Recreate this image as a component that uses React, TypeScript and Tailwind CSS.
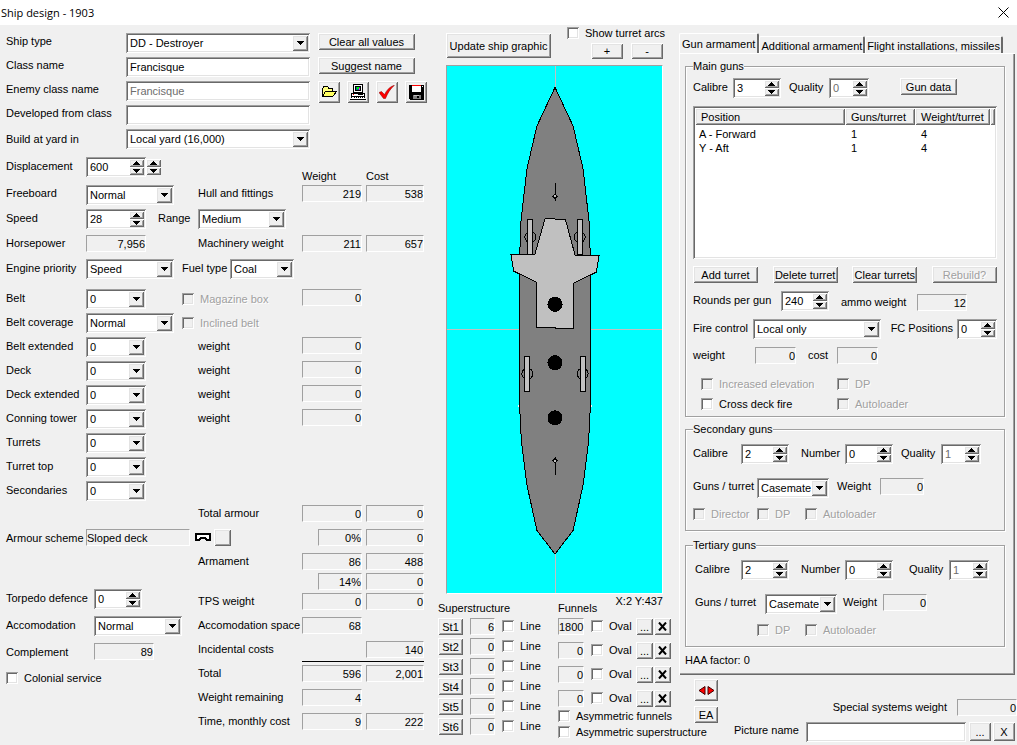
import React, { useId, useState } from 'react';
import { clsx } from 'clsx';

const SUNK = 'bg-white shadow-[inset_1px_1px_#a0a0a0,inset_-1px_-1px_#fff,inset_2px_2px_#696969,inset_-2px_-2px_#e3e3e3]';
const RAISED = 'bg-[#f0f0f0] shadow-[inset_1px_1px_#fff,inset_-1px_-1px_#696969,inset_2px_2px_#e3e3e3,inset_-2px_-2px_#a0a0a0]';
const GREYED = 'text-[#a0a0a0] [text-shadow:1px_1px_#fff]';

const Btn = ({ children, className, disabled, label }: { children?: React.ReactNode, className?: string, disabled?: boolean, label?: string }) => (
  <button type="button" aria-label={label} disabled={disabled} className={clsx('flex items-center justify-center whitespace-nowrap shrink-0', RAISED, disabled && GREYED, className)}>
    {children}
  </button>
);

const Field = ({ value, label, className, id, disabled }: { value?: string, label?: string, className?: string, id?: string, disabled?: boolean }) => (
  <input id={id} aria-label={label} defaultValue={value} disabled={disabled} className={clsx('h-5 min-w-0 px-1 outline-none', SUNK, disabled && 'text-[#6d6d6d]', className)} />
);

const Select = ({ value, label, className, id }: { value: string, label?: string, className?: string, id?: string }) => (
  <span className={clsx('relative flex h-5 shrink-0', className)}>
    <select id={id} aria-label={label} className={clsx('h-5 w-full appearance-none pl-1 pr-[18px] outline-none', SUNK)}>
      <option>{value}</option>
    </select>
    <span className={clsx('pointer-events-none absolute right-0.5 top-0.5 flex h-4 w-4 items-center justify-center', RAISED)}>
      <svg width="7" height="4" shapeRendering="crispEdges"><path d="M0 0h7v1h-1v1h-1v1h-1v1h-1v-1h-1v-1h-1v-1h-1z" /></svg>
    </span>
  </span>
);

const Arrows = ({ value, onStep }: { value: string, onStep: (n: number) => void }) => (
  <>
    <button type="button" aria-label={`${value} up`} onClick={() => onStep(1)} className={clsx('flex h-2 w-[15px] items-center justify-center', RAISED)}>
      <svg width="7" height="4" shapeRendering="crispEdges"><path d="M3 0h1v1h1v1h1v1h1v1h-7v-1h1v-1h1v-1h1z" /></svg>
    </button>
    <button type="button" aria-label={`${value} down`} onClick={() => onStep(-1)} className={clsx('flex h-2 w-[15px] items-center justify-center', RAISED)}>
      <svg width="7" height="4" shapeRendering="crispEdges"><path d="M0 0h7v1h-1v1h-1v1h-1v1h-1v-1h-1v-1h-1v-1h-1z" /></svg>
    </button>
  </>
);

const Spinner = ({ initial, label, className, disabled, id }: { initial: number, label: string, className?: string, disabled?: boolean, id?: string }) => {
  const [value, setValue] = useState(initial);
  return (
    <span className={clsx('flex h-5 shrink-0 p-0.5', SUNK, className)}>
      <input id={id} aria-label={id ? undefined : label} value={value} disabled={disabled} onChange={e => setValue(Number(e.target.value) || 0)} className={clsx('h-4 w-0 min-w-0 flex-1 bg-transparent pl-0.5 outline-none', disabled && 'text-[#6d6d6d]')} />
      <span className="flex flex-col"><Arrows value={label} onStep={n => setValue(v => v + n)} /></span>
    </span>
  );
};

const Value = ({ children, className }: { children: React.ReactNode, className?: string }) => (
  <output className={clsx('block h-[17px] shrink-0 border border-b-white border-l-[#a0a0a0] border-r-white border-t-[#a0a0a0] text-right leading-4', className)}>{children}</output>
);

const Check = ({ children, className, disabled }: { children: React.ReactNode, className?: string, disabled?: boolean }) => (
  <label className={clsx('flex items-center gap-1.5 whitespace-nowrap leading-4', disabled && GREYED, className)}>
    <input type="checkbox" disabled={disabled} className={clsx("h-3 w-3 shrink-0 appearance-none checked:before:block checked:before:text-center checked:before:leading-3 checked:before:content-['✓']", SUNK, disabled && 'bg-[#f0f0f0]!')} />
    {children}
  </label>
);

// One line of the design sheet: label, its control, a caption and the weight / cost figures
const Row = ({ label, id, control, mid, weight, cost, className = 'h-6' }: { label?: string, id?: string, control?: React.ReactNode, mid?: React.ReactNode, weight?: string, cost?: string, className?: string }) => (
  <div className={clsx('flex items-start', className)}>
    <label htmlFor={id} className="w-20 shrink-0">{label}</label>
    <div className="flex w-24 shrink-0">{control}</div>
    <div className="w-[120px] shrink-0">{typeof mid === 'string' ? <span className="pl-4">{mid}</span> : mid}</div>
    {weight !== undefined && <Value className="w-[60px]">{weight}</Value>}
    {cost !== undefined && <Value className="ml-1 w-[58px]">{cost}</Value>}
  </div>
);

const Total = ({ label, weight, cost, percent, className = 'h-6' }: { label?: string, weight?: string, cost?: string, percent?: string, className?: string }) => (
  <div className={clsx('flex items-start', className)}>
    <span className="w-[104px] shrink-0 leading-4">{label}</span>
    <div className="flex w-[60px] shrink-0 justify-end">
      {weight && <Value className="w-[60px]">{weight}</Value>}
      {percent && <Value className="w-11">{percent}</Value>}
    </div>
    {cost && <Value className="ml-1 w-[58px]">{cost}</Value>}
  </div>
);

const ARMOUR = [
  { label: 'Belt extended', weight: '0' },
  { label: 'Deck', weight: '0' },
  { label: 'Deck extended', weight: '0' },
  { label: 'Conning tower', weight: '0' },
  { label: 'Turrets' },
  { label: 'Turret top' },
  { label: 'Secondaries' },
];

const NameBlock = () => (
  <div className="flex items-start pt-2">
    <div className="grid grid-cols-[120px_184px] auto-rows-[24px] items-start leading-4">
      <label htmlFor="ship-type">Ship type</label><Select id="ship-type" value="DD - Destroyer" />
      <label htmlFor="class-name">Class name</label><Field id="class-name" value="Francisque" />
      <label htmlFor="enemy-name">Enemy class name</label><Field id="enemy-name" value="Francisque" disabled />
      <label htmlFor="developed">Developed from class</label><Field id="developed" />
      <label htmlFor="yard" className="pt-0.5">Build at yard in</label><Select id="yard" value="Local yard (16,000)" />
    </div>
    <div className="ml-2 flex flex-col gap-[7px]">
      <Btn className="h-[17px] w-[97px]">Clear all values</Btn>
      <Btn className="h-[17px] w-[97px]">Suggest name</Btn>
      <div className="flex gap-[7px]">
        <Btn label="Open design" className="h-[22px] w-[22px]">
          <svg width="15" height="12" viewBox="0 0 15 12" shapeRendering="crispEdges">
            <path d="M.5 10V2.500L2 .5h3.500l1.500 2h3.500v3" fill="#ffff80" stroke="#000" />
            <path d="M.5 10.500L3.500 5.500h11l-3.500 4.500z" fill="#ffff60" stroke="#000" />
          </svg>
        </Btn>
        <Btn label="Print design" className="h-[22px] w-[22px]">
          <svg width="16" height="16" viewBox="0 0 16 16" shapeRendering="crispEdges">
            <path d="M3 0h10v9H3z" /><path d="M4 1h8v7H4z" fill="#fff" />
            <path d="M5 2h6v5H5z" /><path d="M6 3h4v3H6z" fill="#008080" /><path d="M7 3h2v2H7z" fill="#00ff00" /><path d="M9 4h1v2H9z" fill="#f0f" />
            <path d="M1 9h14v4H1z" /><path d="M2 10h12v2H2z" fill="#fff" />
            <path d="M3 10h1v1H3z" fill="red" /><path d="M8 10h5v1H8z" />
            <path d="M1 13h14v2h1v1H0v-1h1z" /><path d="M2 13h12v1h1v1H1v-1h1z" fill="#fff" />
            <path d="M4 13.500h9" stroke="#000" strokeDasharray="1 1" />
          </svg>
        </Btn>
        <Btn label="Check design" className="h-[22px] w-[22px]">
          <svg width="16" height="14" viewBox="0 0 16 14"><path d="M0 7.500L2.500 6.500L5.500 9.500C8 4.500 11 1.500 15.500.200C11 4 8.500 8.500 6.500 13.500L4.500 13.500z" fill="red" stroke="#800000" strokeWidth=".5" /></svg>
        </Btn>
        <Btn label="Save design" className="h-[22px] w-[22px]">
          <svg width="15" height="15" viewBox="0 0 15 15" shapeRendering="crispEdges">
            <path d="M0 0h15v15H1l-1-1z" /><path d="M3 0h9v7H3z" fill="#fff" /><path d="M3 0h9v1H3z" fill="red" />
            <path d="M13 1h1v1h-1z" fill="#fff" /><path d="M4 10h8v4H4z" fill="#808080" /><path d="M8 11h2v2H8z" fill="#000" /><path d="M5 10h5v1H5z" fill="#c0c0c0" />
          </svg>
        </Btn>
      </div>
    </div>
  </div>
);

const DesignSheet = () => (
  <section className="w-[432px] shrink-0 pl-1.5">
    <NameBlock />
    <div className="flex h-8 items-start pt-1">
      <label htmlFor="displacement" className="w-20">Displacement</label>
      <Spinner id="displacement" initial={600} label="Displacement" className="w-[60px]" />
      <span className="flex h-[18px] flex-col pt-0.5"><Arrows value="Displacement, large step" onStep={() => {}} /></span>
      <span className="ml-auto w-16 pt-2.5">Weight</span>
      <span className="w-[66px] pt-2.5">Cost</span>
    </div>
    <Row label="Freeboard" id="freeboard" control={<Select id="freeboard" value="Normal" className="w-[88px]" />} mid="Hull and fittings" weight="219" cost="538" className="h-6 leading-4" />
    <div className="flex h-[26px] items-start">
      <label htmlFor="speed" className="w-20">Speed</label>
      <Spinner id="speed" initial={28} label="Speed" className="w-[60px]" />
      <label htmlFor="range" className="ml-3 w-10">Range</label>
      <Select id="range" value="Medium" className="w-[88px]" />
    </div>
    <Row label="Horsepower" control={<Value className="w-[60px]">7,956</Value>} mid="Machinery weight" weight="211" cost="657" className="h-6 leading-4" />
    <div className="flex h-[30px] items-start">
      <label htmlFor="engine" className="w-20">Engine priority</label>
      <Select id="engine" value="Speed" className="w-[88px]" />
      <label htmlFor="fuel" className="ml-2 w-12">Fuel type</label>
      <Select id="fuel" value="Coal" className="w-16" />
    </div>
    <Row label="Belt" id="belt" control={<Select id="belt" value="0" className="w-[60px]" />} mid={<Check disabled className="pt-0.5">Magazine box</Check>} weight="0" />
    <Row label="Belt coverage" id="coverage" control={<Select id="coverage" value="Normal" className="w-[88px]" />} mid={<Check disabled className="pt-0.5">Inclined belt</Check>} />
    {ARMOUR.map(a => (
      <Row key={a.label} label={a.label} id={a.label} control={<Select id={a.label} value="0" className="w-[60px]" />} mid={a.weight && 'weight'} weight={a.weight} />
    ))}
    <Row mid="Total armour" weight="0" cost="0" className="h-6 leading-4" />
    <div className="flex h-6 items-start">
      <span className="w-20 shrink-0">Armour scheme</span>
      <output className="h-[17px] w-[104px] border border-b-white border-l-[#a0a0a0] border-r-white border-t-[#a0a0a0] leading-4">Sloped deck</output>
      <svg width="16" height="9" viewBox="0 0 16 9" className="ml-[5px] mt-1" shapeRendering="crispEdges"><path d="M1 1h14v6h-3l-2-2h-4l-2 2h-3z" fill="#fff" stroke="#000" strokeWidth="2" /></svg>
      <Btn label="Choose armour scheme" className="ml-[3px] h-[17px] w-[17px]" />
      <Value className="ml-auto w-11">0%</Value>
      <Value className="ml-1 mr-2 w-[58px]">0</Value>
    </div>
    <div className="flex items-start">
      <div className="grid w-48 shrink-0 grid-cols-[88px_1fr] items-start gap-y-[7px] pt-9">
        <label htmlFor="torpedo">Torpedo defence</label><Spinner id="torpedo" initial={0} label="Torpedo defence" className="w-12" />
        <label htmlFor="accomodation">Accomodation</label><Select id="accomodation" value="Normal" className="w-[88px]" />
        <span>Complement</span><Value className="w-[60px]">89</Value>
        <Check className="col-span-2 pt-0.5">Colonial service</Check>
      </div>
      <div>
        <Total label="Armament" weight="86" cost="488" className="h-5" />
        <Total percent="14%" cost="0" className="h-5" />
        <Total label="TPS weight" weight="0" cost="0" />
        <Total label="Accomodation space" weight="68" />
        <Total label="Incidental costs" cost="140" className="h-5" />
        <div className="mb-[3px] ml-[104px] border-t border-black" />
        <Total label="Total" weight="596" cost="2,001" />
        <Total label="Weight remaining" weight="4" />
        <Total label="Time, monthly cost" weight="9" cost="222" />
      </div>
    </div>
  </section>
);

const ShipGraphic = () => (
  <svg viewBox="447 66 214 527" preserveAspectRatio="xMidYMid slice" className="h-[529px] w-full border border-b-white border-l-[#a0a0a0] border-r-white border-t-[#a0a0a0] bg-[#00ffff]" shapeRendering="crispEdges" role="img" aria-label="Ship graphic">
    <path d="M554.500 60V600M0 329.500H1200" stroke="#c0c0c0" fill="none" />
    <path d="M518 405h1v2h-1zM590 405h1v2h-1z" fill="#fff" />
    <path d="M554.500 88.500L572.500 127L582.500 170L588.500 223L589.500 253V410L588 440L582.500 484L572.500 529.500L554.500 553L536.500 529.500L526.500 484L521 440L519.500 410V253L520.500 223L526.500 170L536.500 127z" fill="#808080" stroke="#000" />
    <g fill="none" stroke="#000">
      <circle cx="530" cy="237.500" r="5.500" /><circle cx="579" cy="237.500" r="5.500" />
      <circle cx="527" cy="373.500" r="5.500" /><circle cx="582" cy="373.500" r="5.500" />
    </g>
    <g fill="#c0c0c0" stroke="#000">
      <rect x="527.500" y="220.500" width="5" height="34" /><rect x="576.500" y="220.500" width="5" height="34" />
      <rect x="524.500" y="356.500" width="5" height="35" /><rect x="579.500" y="356.500" width="5" height="35" />
      <path d="M544.500 219.500L554.500 219.500L565 220.500L574.500 255.500H598.500L595.500 272.500L572.500 283.500V328.500H554.500V327.500H536.500V282.500L513.500 271.500L510.500 254.500H534.500z" />
      <path d="M554.500 184V202M554.500 456V474" />
      <path d="M554.500 194.500L556.500 197L554.500 199.500L552.500 197zM554.500 457.500L556.500 460L554.500 462.500L552.500 460z" />
    </g>
    <circle cx="554.500" cy="304.500" r="7.500" /><circle cx="554.500" cy="362.500" r="7.500" /><circle cx="554.500" cy="417.500" r="7.500" />
  </svg>
);

const Graphic = () => (
  <section className="min-w-0 flex-1 pr-2">
    <div className="pl-2 pr-2">
      <div className="flex items-start justify-between">
        <Btn className="mt-2 h-[25px] w-[105px]">Update ship graphic</Btn>
        <div className="flex h-10 flex-col items-end gap-0.5">
          <Check className="w-24">Show turret arcs</Check>
          <div className="flex gap-2">
            <Btn className="h-4 w-8">+</Btn>
            <Btn className="h-4 w-8">-</Btn>
          </div>
        </div>
      </div>
      <ShipGraphic />
      <p className="-mt-0.5 h-2 text-right">X:2 Y:437</p>
    </div>
    <div className="flex justify-between leading-4">
      <div>
        <p className="h-[18px]">Superstructure</p>
        {['6', '0', '0', '0', '0', '0'].map((n, i) => (
          <div key={i} className="flex h-5 items-start">
            <Btn className="h-[17px] w-[25px]">St{i + 1}</Btn>
            <Value className="ml-[7px] w-[25px]">{n}</Value>
            <Check className="ml-[7px]">Line</Check>
          </div>
        ))}
      </div>
      <div className="w-[113px]">
        <p className="h-[18px]">Funnels</p>
        {['1800', '0', '0', '0'].map((n, i) => (
          <div key={i} className="flex h-6 items-start">
            <Value className="w-[26px]">{n}</Value>
            <Check className="ml-[7px]">Oval</Check>
            <Btn label={`Funnel ${i + 1} position`} className="ml-auto h-[17px] w-[17px]">...</Btn>
            <Btn label={`Remove funnel ${i + 1}`} className="ml-px h-[17px] w-[17px]">
              <svg width="9" height="9" viewBox="0 0 9 9"><path d="M1 .5L8 8.500M8 .5L1 8.500" stroke="#000" strokeWidth="2" /></svg>
            </Btn>
          </div>
        ))}
        <Check className="-mt-1.5">Asymmetric funnels</Check>
        <Check>Asymmetric superstructure</Check>
      </div>
    </div>
  </section>
);

const Group = ({ title, children, className }: { title: string, children: React.ReactNode, className?: string }) => (
  <fieldset className={clsx('border border-[#a0a0a0] px-[7px] shadow-[1px_1px_#fff,inset_1px_1px_#fff]', className)}>
    <legend className="bg-[#f0f0f0] leading-4">{title}</legend>
    {children}
  </fieldset>
);

const MainGuns = () => (
  <Group title="Main guns" className="pb-1">
    <div className="flex items-start pt-1">
      <label htmlFor="m-cal" className="w-10">Calibre</label><Spinner id="m-cal" initial={3} label="Calibre" className="w-12" />
      <label htmlFor="m-q" className="ml-2 w-10">Quality</label><Spinner id="m-q" initial={0} label="Quality" className="w-10" disabled />
      <Btn className="ml-auto mr-10 h-[17px] w-[57px]">Gun data</Btn>
    </div>
    <div className={clsx('mt-2 h-[153px] p-0.5', SUNK)}>
      <table className="w-full table-fixed border-collapse text-left">
        <thead>
          <tr>
            <th className={clsx('h-[17px] w-[150px] p-0 pl-1.5 font-normal leading-4', RAISED)}>Position</th>
            <th className={clsx('h-[17px] w-[70px] p-0 pl-1.5 font-normal leading-4', RAISED)}>Guns/turret</th>
            <th className={clsx('h-[17px] w-[75px] p-0 pl-1.5 font-normal leading-4', RAISED)}>Weight/turret</th>
            <td className={clsx('h-[17px] p-0', RAISED)} />
          </tr>
        </thead>
        <tbody className="leading-[14px]">
          <tr><td className="p-0 pl-1 pt-0.5">A - Forward</td><td className="p-0 pl-1.5 pt-0.5">1</td><td className="p-0 pl-1.5 pt-0.5">4</td><td /></tr>
          <tr><td className="p-0 pl-1">Y - Aft</td><td className="p-0 pl-1.5">1</td><td className="p-0 pl-1.5">4</td><td /></tr>
        </tbody>
      </table>
    </div>
    <div className="mt-[7px] flex justify-between">
      <Btn className="h-[17px] w-[65px]">Add turret</Btn>
      <Btn className="h-[17px] w-[65px]">Delete turret</Btn>
      <Btn className="h-[17px] w-[65px]">Clear turrets</Btn>
      <Btn className="h-[17px] w-[65px]" disabled>Rebuild?</Btn>
    </div>
    <div className="mt-2 flex items-start">
      <label htmlFor="rounds" className="w-[88px]">Rounds per gun</label><Spinner id="rounds" initial={240} label="Rounds per gun" className="w-12" />
      <span className="ml-3 w-[76px] pt-0.5">ammo weight</span><Value className="mt-[3px] w-[50px]">12</Value>
    </div>
    <div className="mt-2 flex items-start">
      <label htmlFor="fc" className="w-[60px]">Fire control</label><Select id="fc" value="Local only" className="w-32" />
      <label htmlFor="fcp" className="ml-auto mr-1">FC Positions</label><Spinner id="fcp" initial={0} label="FC Positions" className="w-10" />
    </div>
    <div className="mt-2 flex items-start leading-4">
      <span className="w-[62px]">weight</span><Value className="w-[41px]">0</Value>
      <span className="ml-3 w-[29px]">cost</span><Value className="w-[41px]">0</Value>
    </div>
    <div className="mt-3 grid grid-cols-[136px_1fr] gap-y-1 pl-2">
      <Check disabled>Increased elevation</Check><Check disabled>DP</Check>
      <Check>Cross deck fire</Check><Check disabled>Autoloader</Check>
    </div>
  </Group>
);

const SmallGuns = ({ title, director }: { title: string, director?: boolean }) => {
  const id = useId();
  return (
    <Group title={title} className="pb-2">
      <div className={clsx('flex items-start pt-[7px]', !director && 'pl-0.5')}>
        <label htmlFor={id + 'c'} className={director ? 'w-12' : 'w-[46px]'}>Calibre</label><Spinner id={id + 'c'} initial={2} label="Calibre" className="w-12" />
        <label htmlFor={id + 'n'} className="ml-3 w-11">Number</label><Spinner id={id + 'n'} initial={0} label="Number" className="w-12" />
        <label htmlFor={id + 'q'} className={clsx('w-10', director ? 'ml-2' : 'ml-4')}>Quality</label><Spinner id={id + 'q'} initial={1} label="Quality" className="w-10" disabled />
      </div>
      <div className={clsx('mt-3.5 flex items-start leading-4', !director && 'pl-0.5')}>
        <label htmlFor={id + 'g'} className={director ? 'w-16' : 'w-[70px]'}>Guns / turret</label><Select id={id + 'g'} value="Casemates" className="w-[72px]" />
        <span className={director ? 'ml-2 w-[43px]' : 'ml-1.5 w-10'}>Weight</span><Value className="w-11">0</Value>
      </div>
      <div className="mt-2 grid grid-cols-[64px_48px_1fr]">
        {director && <Check disabled>Director</Check>}
        <Check disabled className="col-start-2">DP</Check><Check disabled>Autoloader</Check>
      </div>
    </Group>
  );
};

const TABS = ['Gun armament', 'Additional armament', 'Flight installations, missiles'];

const Armament = () => {
  const [tab, setTab] = useState(TABS[0]);
  return (
    <section className="w-[338px] shrink-0 pt-2">
      <div role="tablist" className="flex h-5 items-end pr-3.5">
        {TABS.map(t => (
          <button key={t} type="button" role="tab" aria-selected={t === tab} onClick={() => setTab(t)} className={clsx('whitespace-nowrap rounded-t-xs border-l border-r-2 border-t border-l-white border-r-[#696969] border-t-white', t === tab ? 'h-5 grow-[2]' : 'h-[17px] grow')}>{t}</button>
        ))}
      </div>
      <div role="tabpanel" className="mr-0.5 border-l border-t border-white pb-0.5 pl-[5px] pr-2.5 pt-1 shadow-[inset_-1px_-1px_#696969,inset_-2px_-2px_#a0a0a0]">
        <MainGuns />
        <div className="h-1" />
        <SmallGuns title="Secondary guns" director />
        <div className="h-1.5" />
        <SmallGuns title="Tertiary guns" />
        <p className="py-1">HAA factor: 0</p>
      </div>
      <div className="flex items-start pl-[15px] pt-1">
        <div className="flex flex-col gap-[5px]">
          <Btn label="Mirror" className="h-[22px] w-6">
            <svg width="17" height="9" viewBox="0 0 17 9"><path d="M7 .5v8L1 4.500zM10 .5v8l6-4z" fill="red" stroke="#400000" /></svg>
          </Btn>
          <Btn className="h-[17px] w-6">EA</Btn>
        </div>
        <div className="flex flex-1 flex-col gap-1.5 pt-5 leading-4">
          <div className="flex items-start justify-end"><span className="mr-2.5">Special systems weight</span><Value className="w-[60px]">0</Value></div>
          <div className="flex items-start pl-4">
            <label htmlFor="picture" className="w-[72px]">Picture name</label><Field id="picture" className="w-0 flex-1" />
            <Btn label="Browse picture" className="ml-[3px] h-[19px] w-[22px]">...</Btn>
            <Btn label="Clear picture" className="ml-0.5 mr-0.5 h-[19px] w-[22px]">X</Btn>
          </div>
        </div>
      </div>
    </section>
  );
};

export default function App() {
  return (
    <div className="min-h-screen min-w-[1000px] overflow-hidden whitespace-nowrap bg-[#f0f0f0] font-['Liberation_Sans',Arial,sans-serif] text-[11px] leading-[18px] text-black">
      <header className="flex h-[25px] items-center justify-between bg-white pl-px pr-2">
        <h1 className="font-['Open_Sans',sans-serif] text-[11px]">Ship design - 1903</h1>
        <button type="button" aria-label="Close"><svg width="11" height="11" viewBox="0 0 11 11"><path d="M.5.5l10 10M10.500.500l-10 10" stroke="#000" /></svg></button>
      </header>
      <main className="flex items-start">
        <DesignSheet />
        <div className="w-1.5 shrink-0" />
        <Graphic />
        <Armament />
      </main>
    </div>
  );
}
